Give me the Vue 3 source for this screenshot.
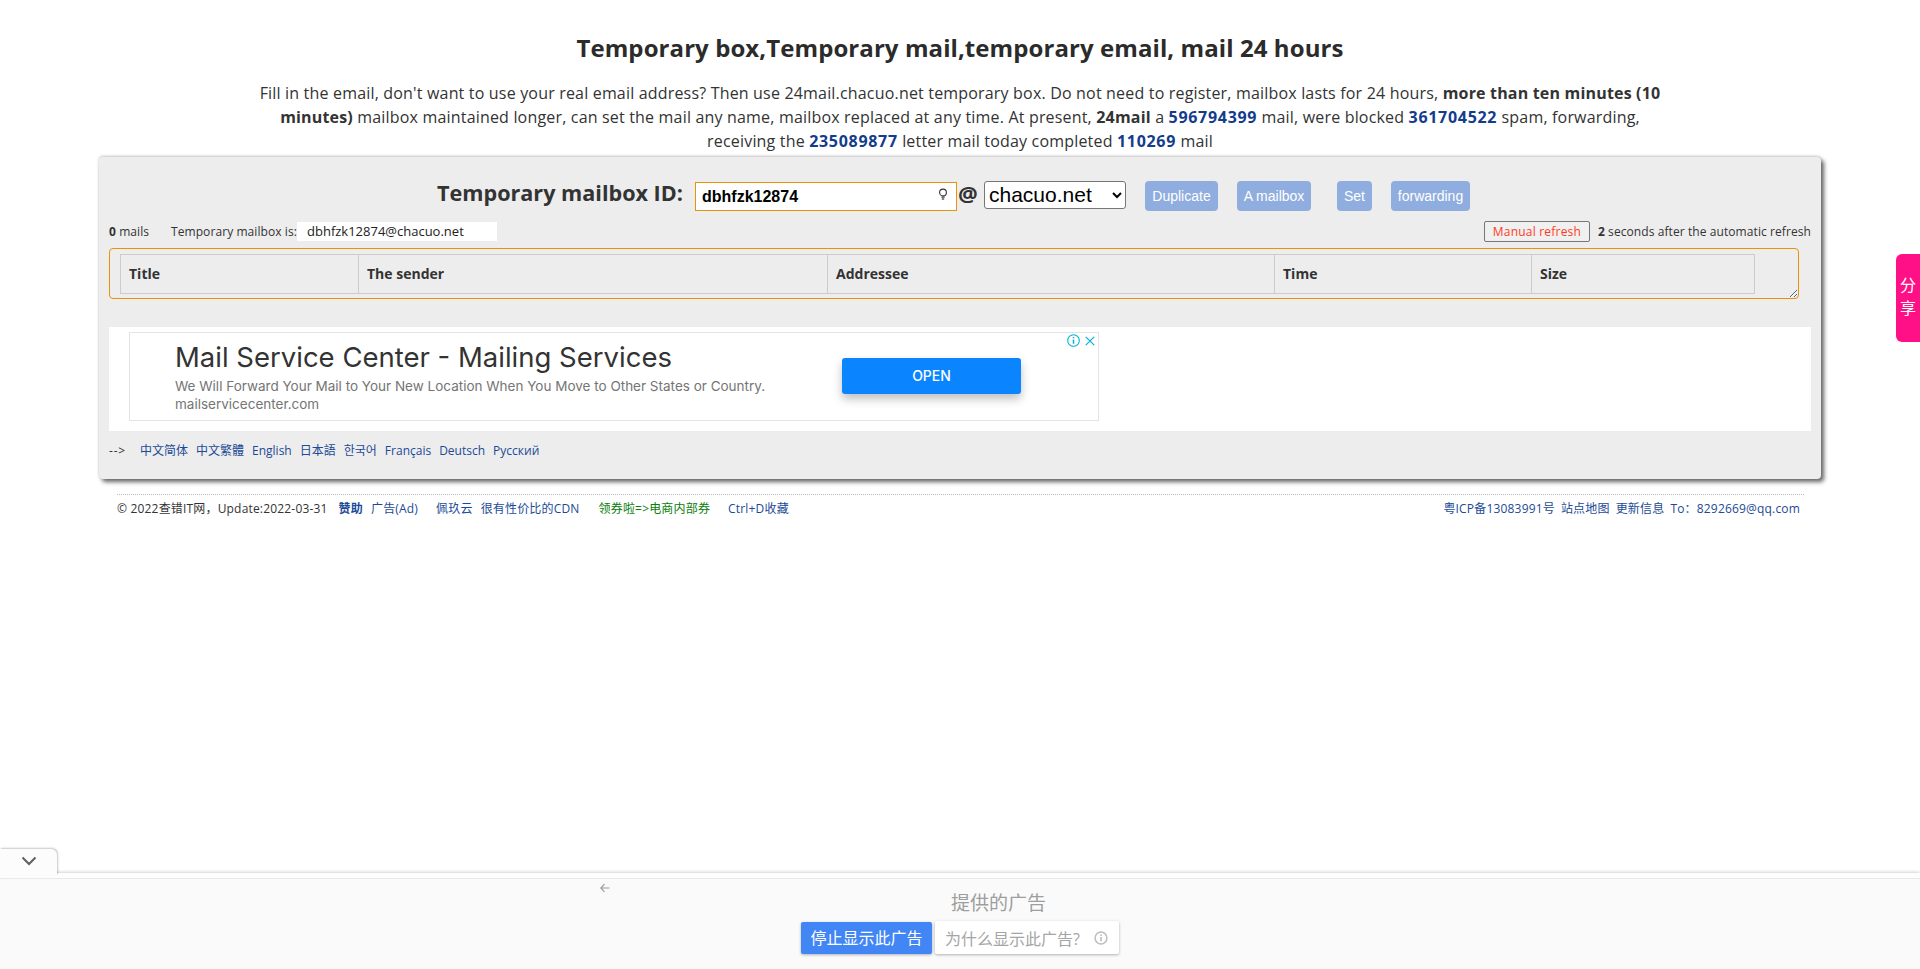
<script setup>
const columns = [
  { label: 'Title', width: 238 },
  { label: 'The sender', width: 469 },
  { label: 'Addressee', width: 447 },
  { label: 'Time', width: 257 },
  { label: 'Size', width: 223 }
]
const actions = [
  { label: 'Duplicate', width: 73, gap: 19 },
  { label: 'A mailbox', width: 74, gap: 26 },
  { label: 'Set', width: 35, gap: 19 },
  { label: 'forwarding', width: 79, gap: 0 }
]
const langs = ['中文简体', '中文繁體', 'English', '日本語', '한국어', 'Français', 'Deutsch', 'Русский']
</script>

<template>
  <div class="page">
    <h1 class="title">Temporary box,Temporary mail,temporary email, mail 24 hours</h1>
    <p class="intro">
      Fill in the email, don't want to use your real email address? Then use 24mail.chacuo.net temporary box. Do not need to register, mailbox lasts for 24 hours, <b>more than ten minutes (10 minutes)</b> mailbox maintained longer, can set the mail any name, mailbox replaced at any time. At present, <b>24mail</b> a <b class="num">596794399</b> mail, were blocked <b class="num">361704522</b> spam, forwarding, receiving the <b class="num">235089877</b> letter mail today completed <b class="num">110269</b> mail
    </p>

    <section class="panel">
      <div class="idrow">
        <span class="idlabel">Temporary mailbox ID:</span>
        <div class="idinput">
          <span>dbhfzk12874</span>
          <svg class="bulb" width="10" height="13" viewBox="0 0 10 13" fill="none">
            <circle cx="5" cy="4.5" r="3.4" stroke="#333" stroke-width="1.1" fill="#fff"/>
            <path d="M3.4 8.5h3.2v1.2H3.4z" fill="#333"/>
            <path d="M3.8 11h2.4" stroke="#333" stroke-width="1.2"/>
          </svg>
        </div>
        <span class="at">@</span>
        <select class="domain"><option>chacuo.net</option></select>
        <div class="actions">
          <button
            v-for="a in actions"
            :key="a.label"
            class="act"
            type="button"
            :style="{ width: a.width + 'px', marginRight: a.gap + 'px' }"
          >{{ a.label }}</button>
        </div>
      </div>

      <div class="inforow">
        <span class="count"><b>0</b> mails</span>
        <span class="current">Temporary mailbox is:</span>
        <span class="address">dbhfzk12874@chacuo.net</span>
        <span class="spacer"></span>
        <button class="refresh" type="button">Manual refresh</button>
        <span class="auto"><b>2</b> seconds after the automatic refresh</span>
      </div>

      <div class="listbox">
        <table class="list">
          <thead>
            <tr>
              <th v-for="c in columns" :key="c.label" :style="{ width: c.width + 'px' }">{{ c.label }}</th>
            </tr>
          </thead>
        </table>
      </div>

      <div class="adwrap">
        <div class="ad">
          <div class="adcopy">
            <div class="adtitle">Mail Service Center - Mailing Services</div>
            <div class="adtext">We Will Forward Your Mail to Your New Location When You Move to Other States or Country.</div>
            <div class="adurl">mailservicecenter.com</div>
          </div>
          <div class="adopen">OPEN</div>
          <div class="adflags">
            <svg width="13" height="13" viewBox="0 0 13 13" fill="none">
              <circle cx="6.5" cy="6.5" r="5.8" stroke="#00b3d8" stroke-width="1.1"/>
              <path d="M6.5 5.4v4.4M6.5 3v1.3" stroke="#00b3d8" stroke-width="1.5"/>
            </svg>
            <svg width="10" height="10" viewBox="0 0 10 10" fill="none">
              <path d="M.8.8l8.4 8.4M9.2.8L.8 9.2" stroke="#00b3d8" stroke-width="1.2"/>
            </svg>
          </div>
        </div>
      </div>

      <div class="langs">
        <span class="arrow">--&gt;</span>
        <a v-for="l in langs" :key="l" class="link">{{ l }}</a>
      </div>
    </section>

    <footer class="foot">
      <div class="footleft">
        <span class="copy">© 2022查错IT网，Update:2022-03-31</span>
        <a class="link strong">赞助</a>
        <a class="link">广告(Ad)</a>
        <a class="link far">佩玖云</a>
        <a class="link">很有性价比的CDN</a>
        <a class="green">领券啦=&gt;电商内部券</a>
        <a class="link far">Ctrl+D收藏</a>
      </div>
      <div class="footright">
        <a class="link">粤ICP备13083991号</a>
        <a class="link">站点地图</a>
        <a class="link">更新信息</a>
        <a class="link">To：8292669@qq.com</a>
      </div>
    </footer>

    <div class="share">分<br>享</div>

    <div class="dock">
      <div class="docktab">
        <svg width="16" height="10" viewBox="0 0 16 10" fill="none">
          <path d="M1.5 1.5L8 8l6.5-6.5" stroke="#5f5f5f" stroke-width="2"/>
        </svg>
      </div>
      <div class="dockmain">
        <svg class="back" width="12" height="12" viewBox="0 0 12 12" fill="none">
          <path d="M10.5 6H2M5.5 2.2L1.8 6l3.7 3.8" stroke="#9a9a9a" stroke-width="1.1"/>
        </svg>
        <div class="dockbody">
          <div class="dockhead">提供的广告</div>
          <div class="dockbtns">
            <div class="stop">停止显示此广告</div>
            <div class="why">
              <span>为什么显示此广告?</span>
              <svg width="14" height="14" viewBox="0 0 14 14" fill="none">
                <circle cx="7" cy="7" r="5.9" stroke="#bdbdbd" stroke-width="1.5"/>
                <path d="M7 6v4.2M7 3.4v1.5" stroke="#bdbdbd" stroke-width="1.6"/>
              </svg>
            </div>
          </div>
        </div>
      </div>
    </div>
  </div>
</template>

<style>
html, body { margin: 0; background: #fff; }
</style>

<style scoped>
.page {
  min-height: 969px;
  box-sizing: border-box;
  padding-top: 32px;
  font-family: "Open Sans", "Noto Sans CJK SC", sans-serif;
  color: #333;
  overflow: hidden;
}
.title {
  margin: 0;
  font-size: 24px;
  letter-spacing: .08px;
  line-height: 32px;
  font-weight: 700;
  text-align: center;
  color: #2b2b2b;
}
.intro {
  width: 1410px;
  margin: 17px auto 0;
  font-size: 16px;
  letter-spacing: .18px;
  line-height: 24px;
  text-align: center;
  color: #333;
}
.num { color: #143c8c; letter-spacing: .7px; }

.panel {
  box-sizing: border-box;
  width: 1722px;
  height: 322px;
  margin: 4px 0 0 99px;
  padding: 23px 10px 0;
  background: #ededed;
  border-radius: 4px;
  box-shadow: 3px 3px 4px #666, 0 -1px 3px #ccc;
}
.idrow {
  display: flex;
  align-items: center;
  height: 31px;
  padding-left: 328px;
}
.idlabel {
  flex: none;
  width: 258px;
  margin-top: -6px;
  font-size: 21.6px;
  font-weight: 700;
  color: #333;
  white-space: nowrap;
}
.idinput {
  box-sizing: border-box;
  width: 262px;
  height: 29px;
  margin-top: 2px;
  padding: 0 8px 0 6px;
  display: flex;
  align-items: center;
  justify-content: space-between;
  background: #fff;
  border: 1px solid #e8920c;
  font: 700 16px "Liberation Sans", Arial, sans-serif;
  color: #000;
}
.bulb { margin-top: -4px; }
.at {
  width: 26px;
  font: 700 22px "Open Sans", sans-serif;
  color: #333;
  margin: -6px 0 0 1px;
}
.domain {
  width: 142px;
  height: 28px;
  margin-top: -2px;
  font: 21px "Liberation Sans", Arial, sans-serif;
  color: #000;
  background: #fff;
  border: 1px solid #767676;
  border-radius: 3px;
  padding: 0;
}
.actions {
  display: flex;
  margin-left: 19px;
}
.act {
  height: 30px;
  padding: 0;
  border: 0;
  border-radius: 4px;
  background: #8fadde;
  color: #fff;
  font: 14px "Liberation Sans", Arial, sans-serif;
}

.inforow {
  display: flex;
  align-items: center;
  height: 21px;
  margin-top: 10px;
  font-size: 12px;
  letter-spacing: .08px;
  color: #333;
}
.count { width: 62px; }
.current { white-space: nowrap; }
.address {
  box-sizing: border-box;
  width: 200px;
  height: 19px;
  line-height: 18px;
  padding-left: 10px;
  background: #fff;
  color: #222;
  font-size: 13px;
  letter-spacing: 0;
}
.spacer { flex: 1; }
.refresh {
  box-sizing: border-box;
  width: 106px;
  height: 21px;
  padding: 0;
  margin-right: 8px;
  background: #f0f0f0;
  border: 1px solid #777;
  border-radius: 2px;
  color: #ff3b1f;
  font: 12px "Open Sans", sans-serif;
  letter-spacing: .2px;
}
.auto { white-space: nowrap; }

.listbox {
  box-sizing: border-box;
  width: 1690px;
  height: 51px;
  margin-top: 6px;
  padding: 5px 0 0 10px;
  border: 1px solid #e8920c;
  border-radius: 4px;
  resize: both;
  overflow: hidden;
}
.list {
  border-collapse: collapse;
  table-layout: fixed;
  width: 1634px;
}
.list th {
  box-sizing: border-box;
  height: 39px;
  padding: 0 8px 2px;
  border: 1px solid #ccc;
  text-align: left;
  font-size: 14px;
  font-weight: 700;
  color: #333;
}

.adwrap {
  height: 104px;
  margin-top: 28px;
  padding: 5px 0 0 20px;
  box-sizing: border-box;
  background: #fff;
}
.ad {
  box-sizing: border-box;
  position: relative;
  width: 970px;
  height: 89px;
  padding: 0 77px 0 45px;
  display: flex;
  align-items: center;
  justify-content: space-between;
  border: 1px solid #e3e3e3;
  font-family: Inter, sans-serif;
}
.adtitle {
  font-size: 27.5px;
  line-height: 34px;
  color: #333;
  white-space: nowrap;
}
.adtext {
  margin-top: 3px;
  font-size: 13.5px;
  line-height: 18px;
  color: #757575;
  white-space: nowrap;
}
.adurl {
  font-size: 13.5px;
  line-height: 18px;
  color: #757575;
}
.adopen {
  width: 179px;
  height: 36px;
  line-height: 36px;
  margin-top: -2px;
  text-align: center;
  background: #0a84ff;
  color: #fff;
  font-size: 14px;
  font-weight: 500;
  border-radius: 3px;
  box-shadow: 0 5px 10px rgba(0, 0, 0, .25);
}
.adflags {
  position: absolute;
  top: 1px;
  right: 3px;
  display: flex;
  align-items: center;
  gap: 5px;
}

.langs {
  display: flex;
  align-items: center;
  gap: 8px;
  height: 16px;
  margin-top: 11px;
  font-size: 12px;
}
.arrow { width: 23px; letter-spacing: .8px; color: #333; }
.link { color: #1c4a96; white-space: nowrap; }

.foot {
  box-sizing: border-box;
  width: 1687px;
  height: 30px;
  margin: 15px 0 0 117px;
  padding-top: 5px;
  display: flex;
  justify-content: space-between;
  border-top: 1px dotted #bbb;
  font-size: 12px;
  letter-spacing: .18px;
  line-height: 18px;
}
.footleft { display: flex; gap: 8px; white-space: nowrap; }
.footright { display: flex; gap: 6px; padding-right: 4px; white-space: nowrap; }
.copy { color: #333; margin-right: 3px; }
.strong { font-weight: 700; }
.far { margin-left: 10px; }
.green { color: #0a7d0a; margin-left: 11px; white-space: nowrap; }

.share {
  position: fixed;
  top: 254px;
  right: 0;
  box-sizing: border-box;
  width: 24px;
  height: 88px;
  padding-top: 20px;
  text-align: center;
  background: #ff1087;
  color: #fff;
  font-size: 16px;
  line-height: 23px;
  border-radius: 6px 0 0 6px;
}

.dock {
  position: fixed;
  left: 0;
  right: 0;
  bottom: 0;
  height: 96px;
  padding-top: 5px;
  box-sizing: border-box;
  background: #fdfdfd;
  box-shadow: 0 -1px 3px rgba(0, 0, 0, .18);
}
.docktab {
  position: absolute;
  left: 0;
  top: -24px;
  width: 57px;
  height: 26px;
  padding-bottom: 2px;
  box-sizing: border-box;
  display: flex;
  align-items: center;
  justify-content: center;
  background: #fcfcfc;
  border-radius: 0 6px 0 0;
  box-shadow: 1px -1px 2px rgba(0, 0, 0, .22);
}
.dockmain {
  position: relative;
  height: 91px;
  box-sizing: border-box;
  border-top: 1px solid #e9e9e9;
  background: #fafafa;
}
.back { position: absolute; left: 599px; top: 3px; }
.dockbody {
  display: flex;
  flex-direction: column;
  align-items: flex-start;
  margin-left: 801px;
  padding-top: 11px;
}
.dockhead {
  margin-left: 150px;
  font-size: 19px;
  line-height: 26px;
  color: #9e9e9e;
}
.dockbtns { display: flex; gap: 3px; align-items: flex-end; margin-top: 5px; }
.stop {
  width: 131px;
  height: 32px;
  line-height: 32px;
  text-align: center;
  font-size: 16px;
  color: #fff;
  background: #4285f4;
  border-radius: 2px;
  box-shadow: 0 1px 3px rgba(0, 0, 0, .3);
}
.why {
  box-sizing: border-box;
  width: 184px;
  height: 33px;
  padding-left: 10px;
  display: flex;
  align-items: center;
  gap: 14px;
  font-size: 16px;
  color: #a5a5a5;
  background: #fff;
  border-radius: 2px;
  box-shadow: 0 1px 3px rgba(0, 0, 0, .3);
}
</style>
